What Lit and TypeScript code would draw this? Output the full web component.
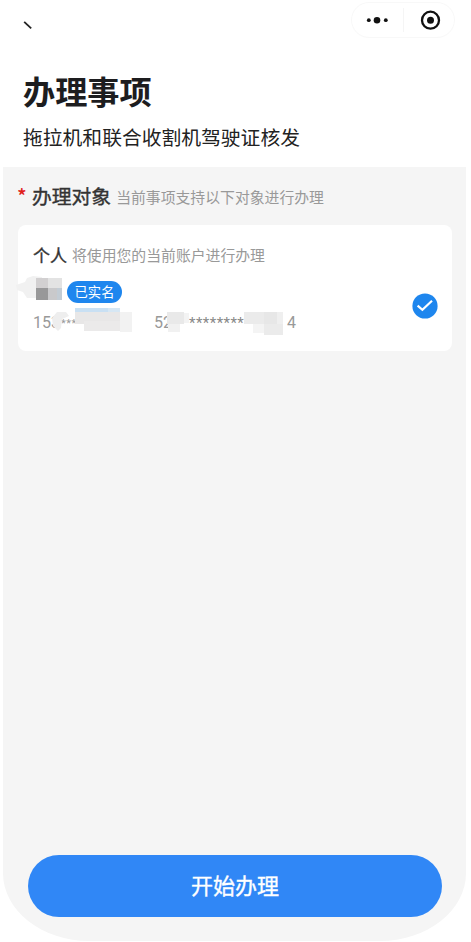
import { LitElement, html, css, svg } from "lit";
import { customElement } from "lit/decorators.js";

type Tile = [x: number, y: number, w: number, h: number, fill: string];

const nameTiles: Tile[] = [
  [36, 278, 12, 10, "#d2d0d1"],
  [48, 278, 14, 10, "#e3e3e3"],
  [36, 288, 12, 12, "#989899"],
  [48, 288, 9, 12, "#c9c9cb"],
  [57, 288, 5, 12, "#c3ccd4"],
];

const phoneTiles: Tile[] = [
  [75, 308, 33, 4, "#c9e0f3"],
  [108, 308, 12, 4, "#d6e7f4"],
  [75, 312, 45, 12, "#e8e7e7"],
  [84, 321, 36, 10, "#ebeaea"],
  [120, 312, 12, 20, "#f2f2f2"],
];

const idTiles: Tile[] = [
  [167, 312, 17, 12, "#e9e9e9"],
  [184, 313, 5, 10, "#f3f3f3"],
  [168, 324, 12, 8, "#f1f1f1"],
  [244, 312, 20, 12, "#ebebeb"],
  [264, 312, 13, 12, "#e7e7e7"],
  [277, 312, 6, 22, "#efefef"],
  [253, 324, 11, 9, "#f4f4f4"],
  [264, 324, 19, 11, "#ebebeb"],
];

const drawTiles = (tiles: Tile[]) =>
  tiles.map(
    ([x, y, w, h, fill]) =>
      svg`<rect x=${x} y=${y} width=${w} height=${h} fill=${fill}></rect>`
  );

@customElement("subject-card")
class SubjectCard extends LitElement {
  static styles = css`
    :host {
      display: flex;
      position: relative;
      box-sizing: border-box;
      height: 126px;
      margin: 0 14px 0 15px;
      padding: 0 14px 0 15px;
      border-radius: 8px;
      background: #fff;
    }
    .info {
      flex: 1;
      display: flex;
      flex-direction: column;
      padding-top: 16px;
    }
    .head {
      display: flex;
      align-items: center;
      gap: 5px;
      height: 26px;
      white-space: nowrap;
    }
    .kind {
      font-size: 17px;
      -webkit-text-stroke: 0.35px #333;
      color: #333;
    }
    .hint {
      font-size: 14.85px;
      color: #999;
    }
    .person {
      display: flex;
      align-items: center;
      height: 22px;
      margin-top: 14px;
      padding-left: 34px;
    }
    .badge {
      width: 55px;
      height: 22px;
      border-radius: 11px;
      background: #1e86ee;
      color: #fff;
      font-size: 13.3px;
      line-height: 21px;
      text-align: center;
    }
    .numbers {
      display: flex;
      height: 20px;
      margin-top: 10px;
      font-family: Roboto, "Noto Sans CJK SC", sans-serif;
      font-size: 16px;
      line-height: 20px;
      color: #999;
      white-space: pre;
    }
    .phone {
      width: 121px;
    }
    .mask {
      margin-left: 1px;
      font-size: 11px;
      vertical-align: 1px;
      letter-spacing: 0.5px;
    }
    .id-start {
      width: 35px;
    }
    .stars {
      width: 94px;
      font-size: 15px;
      letter-spacing: 0.45px;
      color: #888;
    }
    .check {
      align-self: center;
      width: 26px;
      height: 26px;
      margin-top: 36px;
    }
    .mosaic {
      position: absolute;
      left: -3px;
      top: 45px;
      width: 290px;
      height: 70px;
    }
  `;

  render() {
    return html`
      <div class="info">
        <div class="head">
          <span class="kind">个人</span>
          <span class="hint">将使用您的当前账户进行办理</span>
        </div>
        <div class="person"><span class="badge">已实名</span></div>
        <div class="numbers">
          <span class="phone">153<span class="mask">***</span></span>
          <span class="id-start">52</span>
          <span class="stars">********</span>
          <span>&nbsp;4</span>
        </div>
      </div>
      <svg class="check" viewBox="0 0 26 26">
        <circle cx="13" cy="13" r="12.6" fill="#1e86ee"></circle>
        <path d="M5.6 12.6L10.4 16.8L20 7.8" fill="none" stroke="#fff" stroke-width="2.2"></path>
      </svg>
      <svg class="mosaic" viewBox="15 270 290 70">
        <path
          d="M16 285L25 282L27 278L33 276L42 277V298H27L23 292L17 290Z"
          fill="#f1f1f1"
        ></path>
        ${drawTiles(nameTiles)}
        <path
          d="M52 318L57 312H66L69 316L62 319L61 328L58 331L53 326Z"
          fill="#eeeeee"
        ></path>
        ${drawTiles(phoneTiles)} ${drawTiles(idTiles)}
      </svg>
    `;
  }
}

@customElement("app-root")
class AppRoot extends LitElement {
  static styles = css`
    :host {
      display: flex;
      flex-direction: column;
      box-sizing: border-box;
      width: 471px;
      height: 942px;
      overflow: hidden;
      background: #fff;
      font-family: "Noto Sans CJK SC", sans-serif;
    }
    .nav {
      display: flex;
      justify-content: space-between;
      height: 64px;
    }
    .back {
      width: 10px;
      height: 10px;
      margin: 20px 0 0 23px;
    }
    .capsule {
      width: 104px;
      height: 37px;
      margin: 2px 16px 0 0;
    }
    .heading {
      display: flex;
      flex-direction: column;
      height: 103px;
      padding-left: 23px;
      white-space: nowrap;
    }
    .title {
      margin: 2px 0 0;
      font-size: 32.2px;
      line-height: 48px;
      font-weight: 700;
      color: #1d1d1f;
    }
    .subtitle {
      margin-top: 8px;
      font-size: 19.8px;
      line-height: 30px;
      color: #222;
    }
    .panel {
      display: flex;
      flex-direction: column;
      justify-content: space-between;
      box-sizing: border-box;
      height: 774px;
      margin: 0 5px 0 3px;
      padding-bottom: 24px;
      border-radius: 0 0 86px 86px / 0 0 68px 68px;
      background: #f5f5f5;
    }
    .label {
      display: flex;
      align-items: center;
      box-sizing: border-box;
      height: 58px;
      padding: 0 0 2px 14px;
      white-space: nowrap;
    }
    .required {
      width: 15px;
      font-size: 20px;
      font-weight: 500;
      color: #e0201b;
    }
    .name {
      font-size: 19.8px;
      -webkit-text-stroke: 0.4px #333;
      color: #333;
    }
    .note {
      margin: 3px 0 0 5px;
      font-size: 14.85px;
      color: #999;
    }
    .start {
      height: 62px;
      margin: 0 24px 0 25px;
      padding: 0 0 4px;
      border: 0;
      border-radius: 31px;
      background: #3087f6;
      color: #fff;
      font-family: inherit;
      font-size: 22px;
      -webkit-text-stroke: 0.35px #fff;
    }
  `;

  render() {
    return html`
      <header class="nav">
        <svg class="back" viewBox="0 0 10 10">
          <path d="M1.2 1.8L8.2 8.4" fill="none" stroke="#222" stroke-width="1.8"></path>
        </svg>
        <svg class="capsule" viewBox="0 0 104 37">
          <rect x=".5" y=".5" width="103" height="35" rx="17.5" fill="#fff" stroke="#f8f8f8"></rect>
          <path d="M52.5 6V30" stroke="#f5f5f5"></path>
          <circle cx="17.8" cy="18.2" r="1.9" fill="#111"></circle>
          <circle cx="26" cy="18.2" r="3.3" fill="#111"></circle>
          <circle cx="34.8" cy="18.2" r="1.9" fill="#111"></circle>
          <circle cx="79.5" cy="18.2" r="8.5" fill="none" stroke="#111" stroke-width="2.3"></circle>
          <circle cx="79.5" cy="18.2" r="3.5" fill="#111"></circle>
        </svg>
      </header>
      <section class="heading">
        <h1 class="title">办理事项</h1>
        <div class="subtitle">拖拉机和联合收割机驾驶证核发</div>
      </section>
      <main class="panel">
        <section>
          <div class="label">
            <span class="required">*</span>
            <span class="name">办理对象</span>
            <span class="note">当前事项支持以下对象进行办理</span>
          </div>
          <subject-card></subject-card>
        </section>
        <button class="start">开始办理</button>
      </main>
    `;
  }
}
